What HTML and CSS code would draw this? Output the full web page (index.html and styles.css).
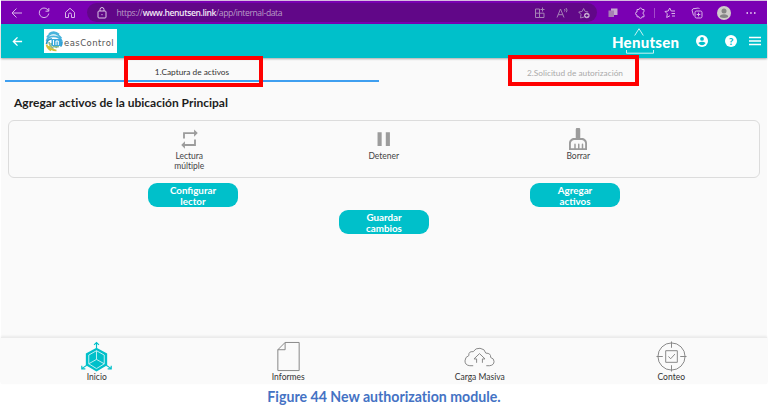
FILE: index.html
```
<!DOCTYPE html>
<html lang="es">
<head>
<meta charset="utf-8">
<title>Henutsen</title>
<link rel="stylesheet" href="styles.css">
</head>
<body>
<div class="window">
  <header class="browser">
    <svg class="ico" viewBox="0 0 14 14"><path d="M12 7H2M6.500 2.500L2 7l4.500 4.500"/></svg>
    <svg class="ico" viewBox="0 0 14 14"><path d="M11.500 5A4.800 4.800 0 1 0 11.800 7.500M11.800 2v3.200H8.500"/></svg>
    <svg class="ico" viewBox="0 0 14 14"><path d="M2.500 6.300L7 2.300l4.500 4v5.200H8.500V8.500a1.500 1.500 0 0 0-3 0v3h-3z"/></svg>
    <div class="address">
      <svg class="ico" viewBox="0 0 14 14"><rect x="3" y="5" width="8" height="7" rx="1"/><path d="M5 5V3.500a2 2 0 0 1 4 0V5M7 8v1.200"/></svg>
      <span class="url">https://<b>www.henutsen.link</b>/app/internal-data</span>
      <svg class="ico" viewBox="0 0 14 14"><path d="M2.500 3H6.500V11.500H2.500zM2.500 7.200H11V11.500H6.500M9.500 1.500v4M7.500 3.500h4"/></svg>
      <svg class="ico" viewBox="0 0 14 14"><path d="M2 11.500L5.500 3 9 11.500M3.200 8.700H7.800M9.500 3q1 1 0 2.500M11 2q2 2 .3 4.300"/></svg>
      <svg class="ico" viewBox="0 0 14 14"><path d="M7 11L3.500 12 4 8.500 1.700 6l3.400-.5L6.600 2.500 8.200 5.500l3 .5"/><circle class="fill" cx="9.800" cy="9.500" r="2.800"/><path class="cut" d="M9.800 8v3M8.300 9.500h3"/></svg>
    </div>
    <nav class="tools">
      <svg class="ico" viewBox="0 0 14 14"><path class="fill" d="M5 2.500h6.500V9H5z"/><path class="dim" d="M2.500 4.500H8V11H2.500z"/></svg>
      <svg class="ico" viewBox="0 0 14 14"><path d="M4 3.500h2a1.500 1.500 0 0 1 3 0h2v2.300a1.400 1.400 0 0 0 0 2.700v2.300H9a1.500 1.500 0 0 1-3 0H4V9a1.500 1.500 0 0 1 0-3z"/></svg>
      <i class="divider"></i>
      <svg class="ico" viewBox="0 0 14 14"><path d="M7 9.700L3.700 11.500l.6-3.700L2 5.500l3.200-.5L6.700 2l1.500 3H12M8.500 7.500H12M9 10h3"/></svg>
      <svg class="ico" viewBox="0 0 14 14"><rect x="5" y="5" width="7" height="7" rx="1.500"/><path d="M8.500 6.700v3.600M6.700 8.500h3.600M3.500 9.500L2 4l1-1.200L8.500 2l1 1"/></svg>
      <svg class="avatar" viewBox="0 0 14 14"><circle cx="7" cy="7" r="7" fill="#cfcdca"/><circle cx="7" cy="5" r="2.500" fill="#858585"/><path d="M2.800 11q0-2.800 4.200-2.800t4.200 2.800q-4 2-8.400 0" fill="#858585"/></svg>
      <svg class="ico" viewBox="0 0 14 14"><path class="fill nos" d="M2.500 6.300H4v1.400H2.500zM6.200 6.300h1.500v1.400H6.200zM10 6.300h1.500v1.400H10z"/></svg>
    </nav>
  </header>

  <div class="appbar">
    <svg class="back" viewBox="0 0 12 12"><path d="M11 6H2M6 1.500L1.500 6 6 10.500"/></svg>
    <div class="brand">
      <svg class="print" viewBox="0 0 18 22">
        <g fill="none" stroke-width="1.700">
          <path stroke="#48b4dc" d="M4 4Q9 0 14 4.500M2 7.500Q4 3.500 8.500 3.500t8 5M1.500 11Q2.500 6.300 8.500 6.300t8.500 5"/>
          <path stroke="#2796c8" d="M1.500 14Q2 9 7 9M17 11.500q0 3-1.500 5"/>
          <path stroke="#88b98a" d="M4 12q.5 4 4.500 6.500M6 13q1.500 3.500 6 4.500M8 16q3 1.500 6 .5"/>
          <path stroke="#d2bf3c" d="M1.500 14.500q1 4 4.500 6M3.500 16q2 4 8 4.500"/>
        </g>
        <path fill="#39a9dc" d="M6.500 9h10v7h-10z"/><path d="M8.500 10v5M11 15v-4h2.300v4" fill="none" stroke="#fff"/>
      </svg>
      <span>easControl</span>
    </div>
    <div class="logo">
      <svg class="roof" viewBox="0 0 10 8"><path d="M.7 7.500L5 .7l4.300 6.800"/></svg>
      <span>Henutsen</span>
      <svg class="base" viewBox="0 0 28 4"><path d="M.5 0v3.200h27V0"/></svg>
    </div>
    <svg class="round user" viewBox="0 0 12 12"><circle cx="6" cy="6" r="6" fill="#fff"/><circle cx="6" cy="3.900" r="1.900" fill="#00c0ca"/><path d="M2.300 8q3.700-2.700 7.400 0Q8 10.300 6 10.300T2.300 8" fill="#00c0ca"/></svg>
    <div class="round help">?</div>
    <svg class="menu" viewBox="0 0 12 10"><path d="M0 1.500h12M0 5h12M0 8.500h12"/></svg>
  </div>

  <main>
    <div class="tabs">
      <div class="tab active"><span>1.Captura de activos</span></div>
      <div class="tab"><span>2.Solicitud de autorización</span></div>
    </div>
    <h1>Agregar activos de la ubicación Principal</h1>
    <section class="card">
      <div class="action">
        <svg viewBox="0 0 24 24"><path d="M7 6.500h10v3l4-4-4-4v3H5v7h2zM17 17.500H7v-3l-4 4 4 4v-3h12v-7h-2z"/></svg>
        <span>Lectura<br>múltiple</span>
      </div>
      <div class="action">
        <svg viewBox="0 0 24 24"><path d="M5.500 4.500H10v15H5.500zM14.500 4.500H19v15h-4.500z"/></svg>
        <span>Detener</span>
      </div>
      <div class="action">
        <svg viewBox="0 0 24 24" preserveAspectRatio="none"><path d="M16 11h-1V1.500a1.500 1.500 0 0 0-1.500-1.500h-3A1.500 1.500 0 0 0 9 1.500V11H7c-3.500 0-7 2.200-7 5.500V24h24v-7.500c0-3.300-3.500-5.500-7-5.500zm5.500 11H19v-4a1 1 0 0 0-2 0v4h-3v-4a1 1 0 0 0-2 0v4H9v-4a1 1 0 0 0-2 0v4H2.500v-5.500C2.500 14.500 5 13 7 13h10c2 0 4.500 1.500 4.500 3.500z"/></svg>
        <span>Borrar</span>
      </div>
    </section>
    <div class="buttons">
      <button>Configurar<br>lector</button>
      <button class="lower">Guardar<br>cambios</button>
      <button>Agregar<br>activos</button>
    </div>
  </main>

  <nav class="bottom">
    <div class="item">
      <svg viewBox="0 0 32 32"><path fill="#00c0ca" d="M16 7l11 6v12L16 31.500 5 25V13z"/><path fill="none" stroke="#d8f6f7" stroke-width=".9" d="M16 10l8 4.500v9L16 28.500 8 23.500v-9zM16 10v9M8 23.500l8-4.500 8 4.500"/><path fill="none" stroke="#00c0ca" stroke-width="1.200" d="M16 8V1.500M13.500 4L16 1.500 18.500 4M6 25l-4.500 3M.8 25.500V28.700H4.500M26 25l4.500 3M31.200 25.500V28.700H27.500"/></svg>
      <span>Inicio</span>
    </div>
    <div class="item line">
      <svg viewBox="0 0 32 32"><path d="M12.500 1.500h14.500v29H5V9zM12.500 1.500V9H5"/></svg>
      <span>Informes</span>
    </div>
    <div class="item line">
      <svg viewBox="0 0 32 32"><path d="M9.500 25.500H6Q1 25 1 20.500 1 16.500 5 15q-.5-4.500 4.500-4Q12 7 16.500 7.500q5 .5 6 5 5.500 0 5 4.500 3.500 1 3.500 4 0 4-4.500 4.500H23M13 22.500v-4h-2.700L16 13l5.700 5.500H19v4"/></svg>
      <span>Carga Masiva</span>
    </div>
    <div class="item line">
      <svg viewBox="0 0 32 32"><circle cx="16" cy="16" r="14"/><path d="M16 .5V7M16 25V31.500M.5 16H7M25 16H31.500M10 10h12v12H10zM12.800 16l2.400 2.300 4.300-4.800"/></svg>
      <span>Conteo</span>
    </div>
  </nav>
  <div class="mark mark-one"></div>
  <div class="mark mark-two"></div>
</div>
<p class="caption">Figure 44 New authorization module.</p>
</body>
</html>
```
FILE: styles.css
```
* { box-sizing: border-box; }
body { margin: 0; background: #fff; font-family: Lato, "Liberation Sans", sans-serif; font-variant-ligatures: none; width: 768px; height: 415px; overflow: hidden; }
svg { display: block; flex: none; overflow: visible; }
.window { position: relative; margin: 0 1px; width: 766px; height: 384px; background: #fafafa; display: flex; flex-direction: column; border-top: 1px solid #d5bce0; }

.browser { height: 23px; flex: none; background: #7a00b3; display: flex; align-items: center; padding-left: 9px; }
.ico { width: 14px; height: 14px; fill: none; stroke: #d8b5e8; stroke-width: 1; }
.ico .fill { fill: #c5aacf; stroke: none; }
.ico .nos { fill: #f3e5fa; }
.ico .dim { fill: #a680b4; stroke: none; }
.ico .cut { stroke: #610788; }
.browser > .ico { margin-right: 12.500px; }
.address { width: 510px; height: 19px; border-radius: 10px; background: #610788; display: flex; align-items: center; padding-left: 8px; margin-left: -3px; }
.address .ico { stroke: #a582b6; margin-right: 8px; }
.address .ico:last-child { margin-right: 6px; }
.address .ico:first-child { stroke: #dcc8e5; margin-right: 8px; }
.url { font: 8.600px/18px "Open Sans", sans-serif; letter-spacing: -.4px; color: #b99bc6; flex: 1; white-space: nowrap; }
.url b { font-weight: 600; color: #f1e8f5; }
.tools { display: grid; grid-template-columns: 27px 27px 2px 28px 26px 28px 27px; align-items: center; justify-items: center; margin-left: 3px; }
.divider { width: 1px; height: 10px; background: #a34bca; }
.avatar { width: 14px; height: 14px; }

.appbar { height: 34px; flex: none; background: #00c0ca; display: flex; align-items: center; box-shadow: 0 1px 2px #0005; }
.back { width: 11px; height: 11px; margin-left: 11px; fill: none; stroke: #fff; stroke-width: 1.500; }
.brand { width: 73px; height: 24px; margin-left: 21px; background: #fff; display: flex; align-items: center; padding-left: 1px; flex: none; }
.print { width: 18px; height: 22px; }
.brand span { font: 8.500px/10px "DejaVu Sans", sans-serif; color: #555; margin: 4px 0 0 1px; letter-spacing: .45px; }
.logo { width: 69px; height: 30px; margin-left: auto; display: flex; flex-direction: column; color: #fff; }
.logo svg { fill: none; stroke: #c9f2f4; stroke-width: 1; }
.roof { width: 10px; height: 8px; margin: 2px 0 0 22px; }
.logo span { font-size: 15px; line-height: 13px; font-weight: 900; letter-spacing: .25px; white-space: nowrap; }
.base { width: 28px; height: 4px; margin: 1px 0 0 14px; }
.round { width: 12px; height: 12px; border-radius: 50%; }
.user { margin-left: 15px; }
.help { margin-left: 17px; background: #fff; color: #00c0ca; font: 900 10px/12px Lato, sans-serif; text-align: center; }
.menu { width: 12px; height: 10px; margin: 0 6px 0 12px; stroke: #fff; stroke-width: 1.300; }

main { flex: 1; }
.tabs { display: grid; grid-template-columns: 374px 1fr; height: 24px; margin: 0 0 0 4px; }
.tab { display: flex; justify-content: center; align-items: center; font-size: 8.300px; line-height: 12px; color: #aaa; padding: 5px 0 0 4px; }
.tab.active { color: #333; padding: 6px 0 0; border-bottom: 2px solid #3f9ff0; }
h1 { margin: 11px 0 0 13px; font-size: 12px; line-height: 20px; font-weight: 700; color: #1d1d1d; white-space: nowrap; }
.card { height: 58px; margin: 7px 7px 0; border: 1px solid #dcdcdc; border-radius: 6px; display: grid; grid-template-columns: repeat(3, 194.500px); padding-left: 83px; }
.action { display: flex; flex-direction: column; align-items: center; padding-top: 7px; font-size: 8.500px; line-height: 10px; color: #444; text-align: center; }
.action svg { width: 23px; height: 22px; fill: #9c9c9c; }
.action:last-child svg { width: 18px; }
.action span { margin-top: 1px; }
.buttons { display: grid; grid-template-columns: repeat(3, 90px); column-gap: 101px; margin: 5px 0 0 147px; align-items: start; }
button { height: 24px; padding: 1px 0 0; border: 0; border-radius: 9px; background: #00c0ca; color: #fff; font: 700 9.800px/11px Lato, sans-serif; }
.lower { margin-top: 27px; }

.bottom { height: 47px; flex: none; display: grid; grid-template-columns: repeat(4, 191.500px); border-top: 1px solid #ebebeb; box-shadow: 0 -1px 2px #0001; }
.item { display: flex; flex-direction: column; align-items: center; padding-top: 3px; font-size: 8.500px; line-height: 10px; color: #333; }
.item svg { width: 31px; height: 31px; }
.line svg { fill: none; stroke: #858585; stroke-width: 1; }

.mark { position: absolute; border: 4px solid #f00; }
.mark-one { left: 123px; top: 55px; width: 139px; height: 31px; }
.mark-two { left: 507px; top: 54px; width: 131px; height: 31px; }
.caption { margin: 4px 0 0; text-align: center; font-size: 14.150px; line-height: 18px; font-weight: 700; color: #4472c4; }
```
